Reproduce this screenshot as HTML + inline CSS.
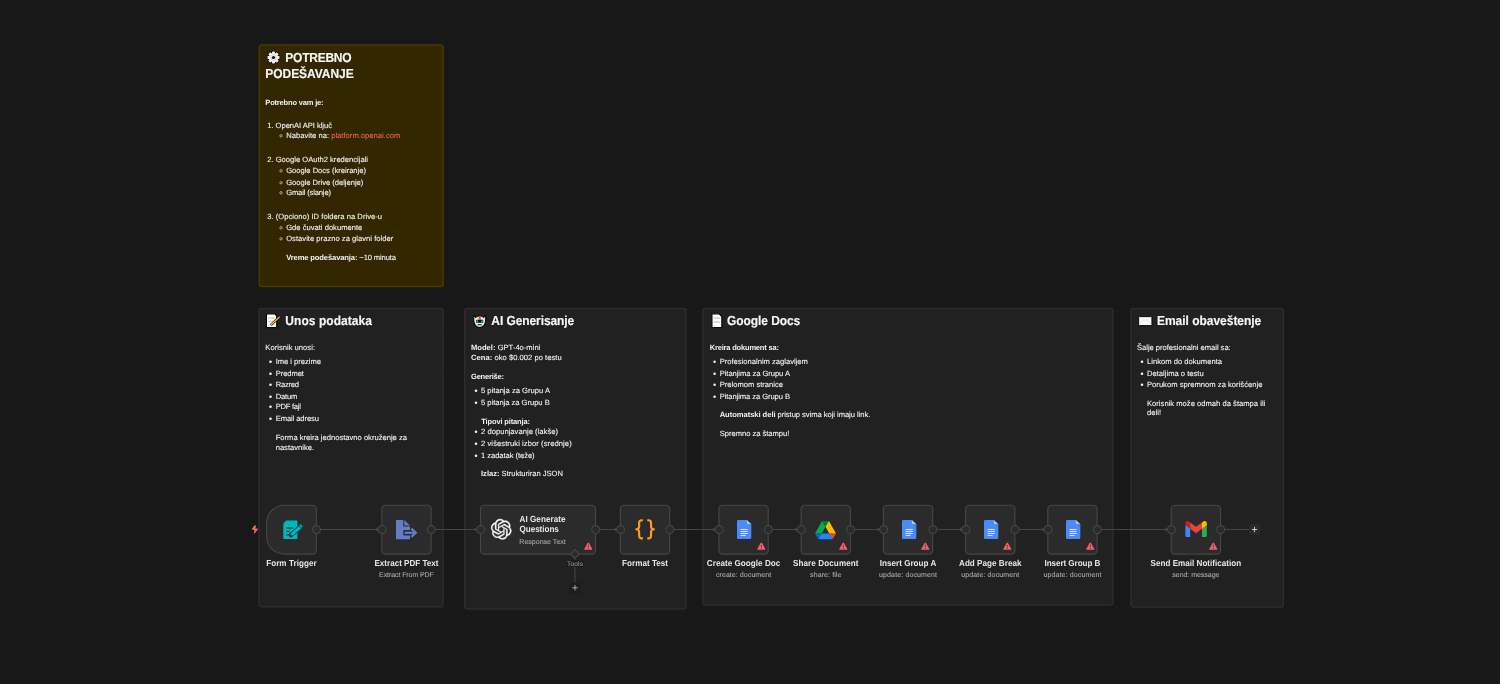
<!DOCTYPE html>
<html lang="sr">
<head>
<meta charset="utf-8">
<meta name="viewport" content="width=1500, initial-scale=1">
<title>n8n – generator testova (workflow)</title>
<style>
html,body{margin:0;padding:0;background:#181818;}
body{width:1500px;height:684px;overflow:hidden;position:relative;font-family:"Liberation Sans",sans-serif;}
#canvas{position:absolute;left:0;top:0;width:1500px;height:684px;overflow:hidden;will-change:transform;background-color:#181818;
 background-image:radial-gradient(circle at 50% 50%, #222222 0, #222222 0.45px, rgba(34,34,34,0) 1.05px);
 background-size:8.2215px 8.2215px;background-position:3.29px 3.29px;}
.sticky,.node,.edges,.trigger{position:absolute;margin:0;padding:0;}
svg{display:block;overflow:visible;}
.bg,.ic{position:absolute;left:0;top:0;}
.t{position:absolute;white-space:pre;margin:0;padding:0;font-weight:400;text-rendering:geometricPrecision;-webkit-text-stroke:0.1px currentColor;}
h2.t,.t.b,.t b{font-weight:700;-webkit-text-stroke:0;}
h2.t{-webkit-text-stroke:0.14px currentColor;}
.t .lnk{color:#ea6350;text-decoration:none;}
.pb{display:inline-block;width:0;height:0;}
</style>
</head>
<body>
<main id="canvas">
<section class="sticky y" id="s1" style="left:257px;top:43px;width:189px;height:246px">
<svg class="bg" width="189" height="246" viewBox="0 0 189 246" aria-hidden="true"><rect x="2.25" y="2" width="183.8" height="241.55" rx="2.6" fill="#332700" stroke="#4b3800" stroke-width="1.45"/><circle cx="24" cy="92.8" r="1.2" fill="none" stroke="#cfc8b4" stroke-width="0.75"/><circle cx="24" cy="127.8" r="1.2" fill="none" stroke="#cfc8b4" stroke-width="0.75"/><circle cx="24" cy="139.8" r="1.2" fill="none" stroke="#cfc8b4" stroke-width="0.75"/><circle cx="24" cy="149.8" r="1.2" fill="none" stroke="#cfc8b4" stroke-width="0.75"/><circle cx="24" cy="184.8" r="1.2" fill="none" stroke="#cfc8b4" stroke-width="0.75"/><circle cx="24" cy="195.8" r="1.2" fill="none" stroke="#cfc8b4" stroke-width="0.75"/></svg>
<svg class="ic" style="left:9.9px;top:7.9px" width="13" height="13" viewBox="0 0 24 24" role="img" aria-label="⚙️"><g transform="translate(12 12)"><g fill="#0c0c0c" stroke="#0c0c0c" stroke-width="2.6" stroke-linejoin="round"><rect x="-2.7" y="-11" width="5.4" height="5.4" rx="0.9" transform="rotate(0)"/><rect x="-2.7" y="-11" width="5.4" height="5.4" rx="0.9" transform="rotate(45)"/><rect x="-2.7" y="-11" width="5.4" height="5.4" rx="0.9" transform="rotate(90)"/><rect x="-2.7" y="-11" width="5.4" height="5.4" rx="0.9" transform="rotate(135)"/><rect x="-2.7" y="-11" width="5.4" height="5.4" rx="0.9" transform="rotate(180)"/><rect x="-2.7" y="-11" width="5.4" height="5.4" rx="0.9" transform="rotate(225)"/><rect x="-2.7" y="-11" width="5.4" height="5.4" rx="0.9" transform="rotate(270)"/><rect x="-2.7" y="-11" width="5.4" height="5.4" rx="0.9" transform="rotate(315)"/><circle r="8.4"/></g><g fill="#f1f1f1"><rect x="-2.7" y="-11" width="5.4" height="5.4" rx="0.9" transform="rotate(0)"/><rect x="-2.7" y="-11" width="5.4" height="5.4" rx="0.9" transform="rotate(45)"/><rect x="-2.7" y="-11" width="5.4" height="5.4" rx="0.9" transform="rotate(90)"/><rect x="-2.7" y="-11" width="5.4" height="5.4" rx="0.9" transform="rotate(135)"/><rect x="-2.7" y="-11" width="5.4" height="5.4" rx="0.9" transform="rotate(180)"/><rect x="-2.7" y="-11" width="5.4" height="5.4" rx="0.9" transform="rotate(225)"/><rect x="-2.7" y="-11" width="5.4" height="5.4" rx="0.9" transform="rotate(270)"/><rect x="-2.7" y="-11" width="5.4" height="5.4" rx="0.9" transform="rotate(315)"/><circle r="8.4"/></g><circle r="5" fill="none" stroke="#c4c4c4" stroke-width="1.3"/><circle r="2.9" fill="#0c0c0c"/></g></svg>
<h2 class="t" id="t0" style="left:28.3px;top:8px;font-size:12px;line-height:15px;color:#f6f6f6;letter-spacing:-0.245px;transform-origin:0 11px;transform:scaleY(1.09);">POTREBNO</h2>
<h2 class="t" id="t1" style="left:8.3px;top:24px;font-size:12px;line-height:15px;color:#f6f6f6;letter-spacing:-0.052px;transform-origin:0 11px;transform:scaleY(1.09);">PODEŠAVANJE</h2>
<p class="t b" id="t2" style="left:8.3px;top:55px;font-size:7.5px;line-height:9px;color:#f2f2f2;letter-spacing:-0.171px;">Potrebno vam je:</p>
<p class="t" id="t3" style="left:10.3px;top:78px;font-size:7.6px;line-height:10px;color:#f2f2f2;letter-spacing:-0.041px;">1. OpenAI API ključ</p>
<p class="t" id="t4" style="left:29.2px;top:88px;font-size:7.6px;line-height:10px;color:#f2f2f2;letter-spacing:0.017px;">Nabavite na: <a class="lnk">platform.openai.com</a></p>
<p class="t" id="t5" style="left:10.3px;top:112px;font-size:7.6px;line-height:10px;color:#f2f2f2;letter-spacing:-0.007px;">2. Google OAuth2 kredencijali</p>
<p class="t" id="t6" style="left:29.2px;top:123px;font-size:7.6px;line-height:10px;color:#f2f2f2;letter-spacing:-0.018px;">Google Docs (kreiranje)</p>
<p class="t" id="t7" style="left:29.2px;top:135px;font-size:7.6px;line-height:10px;color:#f2f2f2;letter-spacing:-0.026px;">Google Drive (deljenje)</p>
<p class="t" id="t8" style="left:29.2px;top:145px;font-size:7.6px;line-height:10px;color:#f2f2f2;letter-spacing:-0.157px;">Gmail (slanje)</p>
<p class="t" id="t9" style="left:10.3px;top:169px;font-size:7.6px;line-height:10px;color:#f2f2f2;letter-spacing:0.022px;">3. (Opciono) ID foldera na Drive-u</p>
<p class="t" id="t10" style="left:29.2px;top:180px;font-size:7.6px;line-height:10px;color:#f2f2f2;letter-spacing:0.006px;">Gde čuvati dokumente</p>
<p class="t" id="t11" style="left:29.2px;top:191px;font-size:7.6px;line-height:10px;color:#f2f2f2;letter-spacing:0.023px;">Ostavite prazno za glavni folder</p>
<p class="t" id="t12" style="left:29.2px;top:210px;font-size:7.6px;line-height:10px;color:#f2f2f2;letter-spacing:-0.127px;"><b>Vreme podešavanja:</b> ~10 minuta</p>
</section>
<section class="sticky g" id="s2" style="left:257px;top:306px;width:188px;height:303px">
<svg class="bg" width="188" height="303" viewBox="0 0 188 303" aria-hidden="true"><rect x="2" y="2.4" width="183.95" height="298.4" rx="2.6" fill="#212121" stroke="#2d2d2d" stroke-width="1.45"/><circle cx="13.5" cy="55.7" r="1.3" fill="#f0f0f0"/><circle cx="13.5" cy="67.7" r="1.3" fill="#f0f0f0"/><circle cx="13.5" cy="78.7" r="1.3" fill="#f0f0f0"/><circle cx="13.5" cy="90.7" r="1.3" fill="#f0f0f0"/><circle cx="13.5" cy="100.7" r="1.3" fill="#f0f0f0"/><circle cx="13.5" cy="112.7" r="1.3" fill="#f0f0f0"/></svg>
<svg class="ic" style="left:8.1px;top:7.15px" width="16.4" height="16.4" viewBox="0 0 24 24" role="img" aria-label="📝"><path d="M2 1.2 H14.4 L17.2 4 V21.4 H2 Z" fill="#fdfdfd" stroke="#0a0a0a" stroke-width="1.9" stroke-linejoin="round"/><g fill="#cfcfcf"><rect x="4.6" y="6.6" width="9.6" height="1.9"/><rect x="4.6" y="11.4" width="7.2" height="1.9"/><rect x="3.6" y="18.2" width="3" height="1"/></g><path d="M9.6 16.6 L21.4 5.8" stroke="#0a0a0a" stroke-width="3.6" stroke-linecap="round"/><path d="M9.2 17.0 L18.8 8.2" stroke="#ffc229" stroke-width="2.0" stroke-linecap="butt"/><path d="M18.8 8.2 L20.4 6.7" stroke="#eeeeee" stroke-width="2.0"/><path d="M20.4 6.7 L21.4 5.8" stroke="#e56a7b" stroke-width="2.0" stroke-linecap="round"/><path d="M9.2 17.0 L7.8 18.3" stroke="#f3e2bb" stroke-width="1.4" stroke-linecap="round"/></svg>
<h2 class="t" id="t13" style="left:28.3px;top:8px;font-size:12px;line-height:15px;color:#f6f6f6;letter-spacing:0.057px;transform-origin:0 11px;transform:scaleY(1.09);">Unos podataka</h2>
<p class="t" id="t14" style="left:8.3px;top:37px;font-size:7.6px;line-height:10px;color:#f2f2f2;letter-spacing:0.022px;">Korisnik unosi:</p>
<p class="t" id="t15" style="left:18.7px;top:51px;font-size:7.6px;line-height:10px;color:#f2f2f2;letter-spacing:-0.023px;">Ime i prezime</p>
<p class="t" id="t16" style="left:18.7px;top:63px;font-size:7.6px;line-height:10px;color:#f2f2f2;letter-spacing:-0.067px;">Predmet</p>
<p class="t" id="t17" style="left:18.7px;top:74px;font-size:7.6px;line-height:10px;color:#f2f2f2;letter-spacing:-0.237px;">Razred</p>
<p class="t" id="t18" style="left:18.7px;top:86px;font-size:7.6px;line-height:10px;color:#f2f2f2;letter-spacing:-0.194px;">Datum</p>
<p class="t" id="t19" style="left:18.7px;top:96px;font-size:7.6px;line-height:10px;color:#f2f2f2;letter-spacing:-0.245px;">PDF fajl</p>
<p class="t" id="t20" style="left:18.7px;top:108px;font-size:7.6px;line-height:10px;color:#f2f2f2;letter-spacing:-0.093px;">Email adresu</p>
<p class="t" id="t21" style="left:18.7px;top:127px;font-size:7.6px;line-height:10px;color:#f2f2f2;">Forma kreira jednostavno okruženje za</p>
<p class="t" id="t22" style="left:18.7px;top:137px;font-size:7.6px;line-height:10px;color:#f2f2f2;letter-spacing:-0.012px;">nastavnike.</p>
</section>
<section class="sticky g" id="s3" style="left:462px;top:306px;width:227px;height:305px">
<svg class="bg" width="227" height="305" viewBox="0 0 227 305" aria-hidden="true"><rect x="2.7" y="2.4" width="221.35" height="300.5" rx="2.6" fill="#212121" stroke="#2d2d2d" stroke-width="1.45"/><circle cx="14" cy="84.7" r="1.3" fill="#f0f0f0"/><circle cx="14" cy="96.7" r="1.3" fill="#f0f0f0"/><circle cx="14" cy="125.7" r="1.3" fill="#f0f0f0"/><circle cx="14" cy="137.7" r="1.3" fill="#f0f0f0"/><circle cx="14" cy="149.7" r="1.3" fill="#f0f0f0"/></svg>
<svg class="ic" style="left:10.6px;top:7.6px" width="13.4" height="14.4" viewBox="0 0 24 26" role="img" aria-label="🤖"><path d="M1.6 1.2 Q3 5 4.6 6.2 Q8 3.6 12 3.6 Q16 3.6 19.4 6.2 Q21 5 22.4 1.2 Q23.4 8 22.6 13 Q21.6 22.6 12 24.6 Q2.4 22.6 1.4 13 Q0.6 8 1.6 1.2 Z" fill="#e9e9e9" stroke="#0a0a0a" stroke-width="2"/><rect x="10.2" y="4.2" width="3.6" height="6.2" fill="#ec3b2c"/><rect x="10.2" y="8.6" width="2" height="1.8" fill="#ffa021"/><rect x="5.6" y="10.6" width="12.8" height="5.4" rx="1.2" fill="#090909"/><rect x="6.2" y="11.2" width="3.2" height="4" rx="1" fill="#19aebd"/><rect x="14.6" y="11.2" width="3.2" height="4" rx="1" fill="#19aebd"/><rect x="8" y="18.4" width="8" height="2" rx="1" fill="#0a0a0a"/></svg>
<h2 class="t" id="t23" style="left:29.3px;top:8px;font-size:12px;line-height:15px;color:#f6f6f6;letter-spacing:-0.081px;transform-origin:0 11px;transform:scaleY(1.09);">AI Generisanje</h2>
<p class="t" id="t24" style="left:9px;top:37px;font-size:7.6px;line-height:10px;color:#f2f2f2;letter-spacing:0.006px;"><b>Model:</b> GPT-4o-mini</p>
<p class="t" id="t25" style="left:9px;top:47px;font-size:7.6px;line-height:10px;color:#f2f2f2;letter-spacing:0.032px;"><b>Cena:</b> oko $0.002 po testu</p>
<p class="t b" id="t26" style="left:9px;top:66px;font-size:7.5px;line-height:9px;color:#f2f2f2;letter-spacing:-0.201px;">Generiše:</p>
<p class="t" id="t27" style="left:19px;top:80px;font-size:7.6px;line-height:10px;color:#f2f2f2;letter-spacing:0.010px;">5 pitanja za Grupu A</p>
<p class="t" id="t28" style="left:19px;top:92px;font-size:7.6px;line-height:10px;color:#f2f2f2;letter-spacing:-0.028px;">5 pitanja za Grupu B</p>
<p class="t b" id="t29" style="left:19.3px;top:111px;font-size:7.5px;line-height:9px;color:#f2f2f2;letter-spacing:-0.143px;">Tipovi pitanja:</p>
<p class="t" id="t30" style="left:19px;top:121px;font-size:7.6px;line-height:10px;color:#f2f2f2;letter-spacing:0.028px;">2 dopunjavanje (lakše)</p>
<p class="t" id="t31" style="left:19px;top:133px;font-size:7.6px;line-height:10px;color:#f2f2f2;letter-spacing:0.077px;">2 višestruki izbor (srednje)</p>
<p class="t" id="t32" style="left:19px;top:145px;font-size:7.6px;line-height:10px;color:#f2f2f2;letter-spacing:-0.057px;">1 zadatak (teže)</p>
<p class="t" id="t33" style="left:19px;top:163px;font-size:7.6px;line-height:10px;color:#f2f2f2;letter-spacing:-0.014px;"><b>Izlaz:</b> Strukturiran JSON</p>
</section>
<section class="sticky g" id="s4" style="left:700px;top:306px;width:415px;height:301px">
<svg class="bg" width="415" height="301" viewBox="0 0 415 301" aria-hidden="true"><rect x="2.95" y="2.4" width="410" height="296.5" rx="2.6" fill="#212121" stroke="#2d2d2d" stroke-width="1.45"/><circle cx="14.6" cy="55.7" r="1.3" fill="#f0f0f0"/><circle cx="14.6" cy="67.7" r="1.3" fill="#f0f0f0"/><circle cx="14.6" cy="78.7" r="1.3" fill="#f0f0f0"/><circle cx="14.6" cy="90.7" r="1.3" fill="#f0f0f0"/></svg>
<svg class="ic" style="left:10.7px;top:7px" width="11.8" height="15.3" viewBox="0 0 20 26" role="img" aria-label="📄"><path d="M1.6 1.4 H13.6 L18.4 6 V24.6 H1.6 Z" fill="#fdfdfd" stroke="#0a0a0a" stroke-width="2" stroke-linejoin="round"/><g fill="#cdcdcd"><rect x="4.2" y="7.4" width="11.4" height="2.4"/><rect x="4.2" y="14.2" width="11.4" height="2.4"/><rect x="4" y="21" width="3.4" height="1.2"/></g></svg>
<h2 class="t" id="t34" style="left:27px;top:8px;font-size:12px;line-height:15px;color:#f6f6f6;letter-spacing:-0.072px;transform-origin:0 11px;transform:scaleY(1.09);">Google Docs</h2>
<p class="t b" id="t35" style="left:9.7px;top:37px;font-size:7.5px;line-height:9px;color:#f2f2f2;letter-spacing:-0.180px;">Kreira dokument sa:</p>
<p class="t" id="t36" style="left:19.7px;top:51px;font-size:7.6px;line-height:10px;color:#f2f2f2;">Profesionalnim zaglavljem</p>
<p class="t" id="t37" style="left:19.7px;top:63px;font-size:7.6px;line-height:10px;color:#f2f2f2;letter-spacing:-0.055px;">Pitanjima za Grupu A</p>
<p class="t" id="t38" style="left:19.7px;top:74px;font-size:7.6px;line-height:10px;color:#f2f2f2;">Prelomom stranice</p>
<p class="t" id="t39" style="left:19.7px;top:86px;font-size:7.6px;line-height:10px;color:#f2f2f2;letter-spacing:-0.077px;">Pitanjima za Grupu B</p>
<p class="t" id="t40" style="left:19.7px;top:104px;font-size:7.6px;line-height:10px;color:#f2f2f2;letter-spacing:-0.048px;"><b>Automatski deli</b> pristup svima koji imaju link.</p>
<p class="t" id="t41" style="left:19.7px;top:123px;font-size:7.6px;line-height:10px;color:#f2f2f2;letter-spacing:-0.022px;">Spremno za štampu!</p>
</section>
<section class="sticky g" id="s5" style="left:1128px;top:306px;width:158px;height:303px">
<svg class="bg" width="158" height="303" viewBox="0 0 158 303" aria-hidden="true"><rect x="2.9" y="2.4" width="152.55" height="298.5" rx="2.6" fill="#212121" stroke="#2d2d2d" stroke-width="1.45"/><circle cx="14" cy="55.7" r="1.3" fill="#f0f0f0"/><circle cx="14" cy="67.7" r="1.3" fill="#f0f0f0"/><circle cx="14" cy="78.7" r="1.3" fill="#f0f0f0"/></svg>
<svg class="ic" style="left:10px;top:9.9px" width="14.6" height="10.2" viewBox="0 0 28 19.6" role="img" aria-label="✉️"><rect x="1.2" y="1.2" width="25.6" height="17.2" rx="1.4" fill="#f7f7f7" stroke="#0a0a0a" stroke-width="1.9"/><path d="M3 16.6 L10 7.6 Q11 6.6 12.4 7.6 L14 8.8 L15.6 7.6 Q17 6.6 18 7.6 L25 16.6" fill="none" stroke="#dcdcdc" stroke-width="1"/></svg>
<h2 class="t" id="t42" style="left:29px;top:8px;font-size:12px;line-height:15px;color:#f6f6f6;letter-spacing:-0.026px;transform-origin:0 11px;transform:scaleY(1.09);">Email obaveštenje</h2>
<p class="t" id="t43" style="left:9px;top:37px;font-size:7.6px;line-height:10px;color:#f2f2f2;letter-spacing:-0.031px;">Šalje profesionalni email sa:</p>
<p class="t" id="t44" style="left:19px;top:51px;font-size:7.6px;line-height:10px;color:#f2f2f2;letter-spacing:0.016px;">Linkom do dokumenta</p>
<p class="t" id="t45" style="left:19px;top:63px;font-size:7.6px;line-height:10px;color:#f2f2f2;letter-spacing:0.009px;">Detaljima o testu</p>
<p class="t" id="t46" style="left:19px;top:74px;font-size:7.6px;line-height:10px;color:#f2f2f2;letter-spacing:0.021px;">Porukom spremnom za korišćenje</p>
<p class="t" id="t47" style="left:19px;top:93px;font-size:7.6px;line-height:10px;color:#f2f2f2;letter-spacing:0.017px;">Korisnik može odmah da štampa ili</p>
<p class="t" id="t48" style="left:19px;top:102px;font-size:7.6px;line-height:10px;color:#f2f2f2;letter-spacing:0.016px;">deli!</p>
</section>
<svg class="edges" id="edges" width="1500" height="684" viewBox="0 0 1500 684" aria-hidden="true" style="left:0;top:0">
<g fill="none" stroke="#454545" stroke-width="1.05"><path d="M316.3 529.5 H381.8"/><path d="M376.2 527.9 L378.2 529.5 L376.2 531.1 Z" fill="#4c4c4c" stroke="#4c4c4c" stroke-width="0.4"/><path d="M431.1 529.5 H480.5"/><path d="M474.9 527.9 L476.9 529.5 L474.9 531.1 Z" fill="#4c4c4c" stroke="#4c4c4c" stroke-width="0.4"/><path d="M595.5 529.5 H620.4"/><path d="M614.8 527.9 L616.8 529.5 L614.8 531.1 Z" fill="#4c4c4c" stroke="#4c4c4c" stroke-width="0.4"/><path d="M669.7 529.5 H718.9"/><path d="M713.3 527.9 L715.3 529.5 L713.3 531.1 Z" fill="#4c4c4c" stroke="#4c4c4c" stroke-width="0.4"/><path d="M768.2 529.5 H801.1"/><path d="M795.5 527.9 L797.5 529.5 L795.5 531.1 Z" fill="#4c4c4c" stroke="#4c4c4c" stroke-width="0.4"/><path d="M850.4 529.5 H883.4"/><path d="M877.8 527.9 L879.8 529.5 L877.8 531.1 Z" fill="#4c4c4c" stroke="#4c4c4c" stroke-width="0.4"/><path d="M932.7 529.5 H965.6"/><path d="M960 527.9 L962 529.5 L960 531.1 Z" fill="#4c4c4c" stroke="#4c4c4c" stroke-width="0.4"/><path d="M1014.9 529.5 H1047.8"/><path d="M1042.2 527.9 L1044.2 529.5 L1042.2 531.1 Z" fill="#4c4c4c" stroke="#4c4c4c" stroke-width="0.4"/><path d="M1097.1 529.5 H1171.2"/><path d="M1165.6 527.9 L1167.6 529.5 L1165.6 531.1 Z" fill="#4c4c4c" stroke="#4c4c4c" stroke-width="0.4"/><path d="M1220.5 529.5 H1249.5"/><path d="M574.9 558 V582.5"/></g>
<rect x="1249" y="524" width="11" height="11" rx="2.2" fill="#2a2a2a"/><path d="M1251.9 529.5 H1257.1 M1254.5 526.9 V532.1" stroke="#d6d6d6" stroke-width="0.9" fill="none"/><rect x="569.4" y="582.2" width="11.2" height="11.2" rx="2.2" fill="#1d1d1d"/><path d="M572.3 587.8 H577.7 M575 585.1 V590.5" stroke="#b8b8b8" stroke-width="0.9" fill="none"/>
</svg>
<div class="node trigger" id="n1" style="left:260px;top:500px;width:63px;height:82px">
<svg class="bg" width="63" height="82" viewBox="0 0 63 82" aria-hidden="true"><path d="M24.6 5.25 H52.7 A3.6 3.6 0 0 1 56.3 8.85 V50.55 A3.6 3.6 0 0 1 52.7 54.15 H24.6 A18.0 18.0 0 0 1 6.6 36.15 V23.25 A18.0 18.0 0 0 1 24.6 5.25 Z" fill="#2b2b2b" stroke="#464646" stroke-width="1.15"/><circle cx="56.5" cy="29.5" r="3.95" fill="#2b2b2b" stroke="#464646" stroke-width="1.15"/></svg>
<svg class="ic" style="left:-9.4px;top:24.8px" width="8" height="8.6" viewBox="0 0 8 8.6" ><path d="M3.4 0.4 L5.1 0.4 L4.5 3.4 L7.3 3.8 L3.9 8.2 L2.9 8.2 L3.5 5.1 L0.5 4.6 Z" fill="#ee6a60"/></svg><svg class="ic" style="left:22.7px;top:19.8px" width="19.6" height="19.4" viewBox="0 0 20 19.8" ><path d="M3.1 0.4 H14.7 V19.4 H0.3 V3.2 Z" fill="#00b7bc"/><path d="M0.3 3.2 L3.1 0.4 V3.2 Z" fill="#123c40"/><path d="M1.2 3.1 L2.9 1.4 V3.1 Z" fill="#7fdcdf"/><g fill="#123c40"><rect x="3.3" y="7.5" width="6.9" height="1.3"/><rect x="3.3" y="11" width="3.4" height="1.3"/><rect x="3.3" y="14.4" width="3" height="1.3"/></g><path d="M8.1 15.3 L18.9 6.1" stroke="#123c40" stroke-width="4.9" stroke-linecap="round"/><path d="M9.2 14.4 L18.2 6.7" stroke="#00b7bc" stroke-width="3.1" stroke-linecap="butt"/><path d="M7.6 15.8 L8.6 12.6 L10.9 15.2 Z" fill="#00b7bc"/><path d="M16.0 5.3 L19.2 9.0" stroke="#123c40" stroke-width="0.7"/><path d="M17.9 4.2 L20 6.6 L19.0 7.5 L16.9 5.1 Z" fill="#00b7bc"/></svg>
<div class="t b label" id="t49" style="left:6.15px;top:59px;font-size:8.1px;line-height:10px;color:#e6e6e6;letter-spacing:0.062px;transform-origin:0 7px;transform:scaleY(1.08);">Form Trigger</div>
</div>
<div class="node std" id="n2" style="left:375px;top:500px;width:63px;height:82px">
<svg class="bg" width="63" height="82" viewBox="0 0 63 82" aria-hidden="true"><path d="M10.4 5.25 H52.5 A3.6 3.6 0 0 1 56.1 8.85 V50.55 A3.6 3.6 0 0 1 52.5 54.15 H10.4 A3.6 3.6 0 0 1 6.8 50.55 V8.85 A3.6 3.6 0 0 1 10.4 5.25 Z" fill="#2b2b2b" stroke="#464646" stroke-width="1.15"/><circle cx="7" cy="29.5" r="3.95" fill="#2b2b2b" stroke="#464646" stroke-width="1.15"/><circle cx="56.3" cy="29.5" r="3.95" fill="#2b2b2b" stroke="#464646" stroke-width="1.15"/></svg>
<svg class="ic" style="left:21px;top:20px" width="20.8" height="19.2" viewBox="0 0 20.8 19.2" ><path d="M0 0 H7.3 V6.6 H14 V9.9 H8.6 Q7.2 9.9 7.2 11.3 V14.2 Q7.2 15.6 8.6 15.6 H14 V19.2 H0 Z" fill="#647cc7"/><path d="M8.3 0 L14 5.6 H8.3 Z" fill="#647cc7"/><path d="M8.6 12.75 H19.2" stroke="#647cc7" stroke-width="2.3" fill="none"/><path d="M15.3 8.6 L19.8 12.75 L15.3 16.9" stroke="#647cc7" stroke-width="2.2" fill="none" stroke-linejoin="miter"/></svg>
<div class="t b label" id="t50" style="left:-0.55px;top:59px;font-size:8.1px;line-height:10px;color:#e6e6e6;letter-spacing:-0.011px;transform-origin:0 7px;transform:scaleY(1.08);">Extract PDF Text</div>
<div class="t sub" id="t51" style="left:4.05px;top:71px;font-size:7.0px;line-height:9px;color:#a8a8a8;letter-spacing:-0.081px;">Extract From PDF</div>
</div>
<div class="node ai" id="n3" style="left:474px;top:500px;width:128px;height:82px">
<svg class="bg" width="128" height="82" viewBox="0 0 128 82" aria-hidden="true"><path d="M10.1 5.25 H117.9 A3.6 3.6 0 0 1 121.5 8.85 V50.55 A3.6 3.6 0 0 1 117.9 54.15 H10.1 A3.6 3.6 0 0 1 6.5 50.55 V8.85 A3.6 3.6 0 0 1 10.1 5.25 Z" fill="#2b2b2b" stroke="#464646" stroke-width="1.15"/><circle cx="6.7" cy="29.5" r="3.95" fill="#2b2b2b" stroke="#464646" stroke-width="1.15"/><circle cx="121.7" cy="29.5" r="3.95" fill="#2b2b2b" stroke="#464646" stroke-width="1.15"/><path d="M96.7 53.9 L101 49.6 L105.3 53.9 L101 58.2 Z" fill="#2b2b2b" stroke="#464646" stroke-width="1.15"/><rect x="92.6" y="60.2" width="16.8" height="6.8" fill="#1c1c1c"/></svg>
<svg class="ic" style="left:16.8px;top:19.3px" width="20.5" height="20.5" viewBox="0 0 24 24" ><path fill="#f7f7f7" stroke="#f7f7f7" stroke-width="0.35" d="M22.2819 9.8211a5.9847 5.9847 0 0 0-.5157-4.9108 6.0462 6.0462 0 0 0-6.5098-2.9A6.0651 6.0651 0 0 0 4.9807 4.1818a5.9847 5.9847 0 0 0-3.9977 2.9 6.0462 6.0462 0 0 0 .7427 7.0966 5.98 5.98 0 0 0 .511 4.9107 6.051 6.051 0 0 0 6.5146 2.9001A5.9847 5.9847 0 0 0 13.2599 24a6.0557 6.0557 0 0 0 5.7718-4.2058 5.9894 5.9894 0 0 0 3.9977-2.9001 6.0557 6.0557 0 0 0-.7475-7.0729zm-9.022 12.6081a4.4755 4.4755 0 0 1-2.8764-1.0408l.1419-.0804 4.7783-2.7582a.7948.7948 0 0 0 .3927-.6813v-6.7369l2.02 1.1686a.071.071 0 0 1 .038.052v5.5826a4.504 4.504 0 0 1-4.4945 4.4944zm-9.6607-4.1254a4.4708 4.4708 0 0 1-.5346-3.0137l.142.0852 4.783 2.7582a.7712.7712 0 0 0 .7806 0l5.8428-3.3685v2.3324a.0804.0804 0 0 1-.0332.0615L9.74 19.9502a4.4992 4.4992 0 0 1-6.1408-1.6464zM2.3408 7.8956a4.485 4.485 0 0 1 2.3655-1.9728V11.6a.7664.7664 0 0 0 .3879.6765l5.8144 3.3543-2.0201 1.1685a.0757.0757 0 0 1-.071 0l-4.8303-2.7865A4.504 4.504 0 0 1 2.3408 7.872zm16.5963 3.8558L13.1038 8.364 15.1192 7.2a.0757.0757 0 0 1 .071 0l4.8303 2.7913a4.4944 4.4944 0 0 1-.6765 8.1042v-5.6772a.79.79 0 0 0-.407-.667zm2.0107-3.0231l-.142-.0852-4.7735-2.7818a.7759.7759 0 0 0-.7854 0L9.409 9.2297V6.8974a.0662.0662 0 0 1 .0284-.0615l4.8303-2.7866a4.4992 4.4992 0 0 1 6.6802 4.66zM8.3065 12.863l-2.02-1.1638a.0804.0804 0 0 1-.038-.0567V6.0742a4.4992 4.4992 0 0 1 7.3757-3.4537l-.142.0805L8.704 5.459a.7948.7948 0 0 0-.3927.6813zm1.0976-2.3654l2.602-1.4998 2.6069 1.4998v2.9994l-2.5974 1.4997-2.6067-1.4997Z"/></svg><svg class="ic" style="left:109.9px;top:42.2px" width="8.6" height="8.2" viewBox="0 0 20 18.6" ><path d="M10 1.2 Q11 1.2 11.6 2.2 L19.4 16 Q20.2 17.8 18.2 18 H1.8 Q-0.2 17.8 0.6 16 L8.4 2.2 Q9 1.2 10 1.2 Z" fill="#f0616d"/><rect x="8.9" y="6" width="2.2" height="6.4" rx="1" fill="#7a2a33"/><circle cx="10" cy="15" r="1.3" fill="#7a2a33"/></svg>
<div class="t b label" id="t65" style="left:45.5px;top:15px;font-size:8.1px;line-height:10px;color:#e6e6e6;letter-spacing:0.056px;transform-origin:0 7px;transform:scaleY(1.1);">AI Generate</div>
<div class="t b label" id="t66" style="left:45.5px;top:25px;font-size:8.1px;line-height:10px;color:#e6e6e6;letter-spacing:-0.035px;transform-origin:0 7px;transform:scaleY(1.1);">Questions</div>
<div class="t sub" id="t67" style="left:45.3px;top:38px;font-size:7.0px;line-height:9px;color:#a8a8a8;letter-spacing:0.026px;">Response Text</div>
<div class="t sub" id="t68" style="left:93px;top:61px;font-size:6.6px;line-height:8px;color:#8e8e8e;letter-spacing:0.148px;">Tools</div>
</div>
<div class="node std" id="n4" style="left:614px;top:500px;width:62px;height:82px">
<svg class="bg" width="62" height="82" viewBox="0 0 62 82" aria-hidden="true"><path d="M10 5.25 H52.1 A3.6 3.6 0 0 1 55.7 8.85 V50.55 A3.6 3.6 0 0 1 52.1 54.15 H10 A3.6 3.6 0 0 1 6.4 50.55 V8.85 A3.6 3.6 0 0 1 10 5.25 Z" fill="#2b2b2b" stroke="#464646" stroke-width="1.15"/><circle cx="6.6" cy="29.5" r="3.95" fill="#2b2b2b" stroke="#464646" stroke-width="1.15"/><circle cx="55.9" cy="29.5" r="3.95" fill="#2b2b2b" stroke="#464646" stroke-width="1.15"/></svg>
<svg class="ic" style="left:21px;top:19.3px" width="20.2" height="20.6" viewBox="0 0 20.2 20.6" ><g fill="none" stroke="#ff9a22" stroke-width="2.15" stroke-linejoin="round"><path d="M7.9 1.2 H6.7 Q4.15 1.2 4.15 3.8 V7.6 Q4.15 10 1.5 10.3 Q4.15 10.6 4.15 13 V16.8 Q4.15 19.4 6.7 19.4 H7.9"/><path d="M12.3 1.2 H13.5 Q16.05 1.2 16.05 3.8 V7.6 Q16.05 10 18.7 10.3 Q16.05 10.6 16.05 13 V16.8 Q16.05 19.4 13.5 19.4 H12.3"/></g><path d="M0.1 10.3 L2.6 9.1 V11.5 Z M20.1 10.3 L17.6 9.1 V11.5 Z" fill="#ff9a22"/></svg>
<div class="t b label" id="t52" style="left:8.05px;top:59px;font-size:8.1px;line-height:10px;color:#e6e6e6;letter-spacing:0.027px;transform-origin:0 7px;transform:scaleY(1.08);">Format Test</div>
</div>
<div class="node std" id="n5" style="left:712px;top:500px;width:63px;height:82px">
<svg class="bg" width="63" height="82" viewBox="0 0 63 82" aria-hidden="true"><path d="M10.5 5.25 H52.6 A3.6 3.6 0 0 1 56.2 8.85 V50.55 A3.6 3.6 0 0 1 52.6 54.15 H10.5 A3.6 3.6 0 0 1 6.9 50.55 V8.85 A3.6 3.6 0 0 1 10.5 5.25 Z" fill="#2b2b2b" stroke="#464646" stroke-width="1.15"/><circle cx="7.1" cy="29.5" r="3.95" fill="#2b2b2b" stroke="#464646" stroke-width="1.15"/><circle cx="56.4" cy="29.5" r="3.95" fill="#2b2b2b" stroke="#464646" stroke-width="1.15"/></svg>
<svg class="ic" style="left:25.35px;top:20.2px" width="14.3" height="19" viewBox="0 0 29 40" preserveAspectRatio="none"><path d="M2.6 0 H20 L29 9 V37.4 Q29 40 26.4 40 H2.6 Q0 40 0 37.4 V2.6 Q0 0 2.6 0 Z" fill="#4b8bf5"/><path d="M20 0 L29 9 H22.4 Q20 9 20 6.6 Z" fill="#a9c7fb"/><path d="M20.6 9 H29 V15 Z" fill="#3a72d4" opacity=".5"/><g fill="#eaf1fe"><rect x="7.2" y="19.2" width="14.6" height="1.9"/><rect x="7.2" y="23.3" width="14.6" height="1.9"/><rect x="7.2" y="27.4" width="14.6" height="1.9"/><rect x="7.2" y="31.5" width="10.2" height="1.9"/></g></svg><svg class="ic" style="left:44.6px;top:42.2px" width="8.6" height="8.2" viewBox="0 0 20 18.6" ><path d="M10 1.2 Q11 1.2 11.6 2.2 L19.4 16 Q20.2 17.8 18.2 18 H1.8 Q-0.2 17.8 0.6 16 L8.4 2.2 Q9 1.2 10 1.2 Z" fill="#f0616d"/><rect x="8.9" y="6" width="2.2" height="6.4" rx="1" fill="#7a2a33"/><circle cx="10" cy="15" r="1.3" fill="#7a2a33"/></svg>
<div class="t b label" id="t53" style="left:-5.2px;top:59px;font-size:8.1px;line-height:10px;color:#e6e6e6;letter-spacing:0.039px;transform-origin:0 7px;transform:scaleY(1.08);">Create Google Doc</div>
<div class="t sub" id="t54" style="left:3.95px;top:71px;font-size:7.0px;line-height:9px;color:#a8a8a8;letter-spacing:0.074px;">create: document</div>
</div>
<div class="node std" id="n6" style="left:795px;top:500px;width:62px;height:82px">
<svg class="bg" width="62" height="82" viewBox="0 0 62 82" aria-hidden="true"><path d="M9.7 5.25 H51.8 A3.6 3.6 0 0 1 55.4 8.85 V50.55 A3.6 3.6 0 0 1 51.8 54.15 H9.7 A3.6 3.6 0 0 1 6.1 50.55 V8.85 A3.6 3.6 0 0 1 9.7 5.25 Z" fill="#2b2b2b" stroke="#464646" stroke-width="1.15"/><circle cx="6.3" cy="29.5" r="3.95" fill="#2b2b2b" stroke="#464646" stroke-width="1.15"/><circle cx="55.6" cy="29.5" r="3.95" fill="#2b2b2b" stroke="#464646" stroke-width="1.15"/></svg>
<svg class="ic" style="left:20px;top:20.7px" width="21" height="18.3" viewBox="0 0 87.3 78" ><path d="m6.6 66.85 3.85 6.65c.8 1.4 1.95 2.5 3.3 3.3l13.75-23.8h-27.5c0 1.55.4 3.1 1.2 4.5z" fill="#0066da"/><path d="m43.65 25-13.75-23.8c-1.35.8-2.5 1.9-3.3 3.3l-25.4 44a9.06 9.06 0 0 0 -1.2 4.5h27.5z" fill="#00ac47"/><path d="m73.55 76.8c1.35-.8 2.5-1.9 3.3-3.3l1.6-2.75 7.65-13.25c.8-1.4 1.2-2.95 1.2-4.5h-27.502l5.852 11.5z" fill="#ea4335"/><path d="m43.65 25 13.75-23.8c-1.35-.8-2.9-1.2-4.5-1.2h-18.5c-1.6 0-3.15.45-4.5 1.2z" fill="#00832d"/><path d="m59.8 53h-32.3l-13.75 23.8c1.35.8 2.9 1.2 4.5 1.2h50.8c1.6 0 3.15-.45 4.5-1.2z" fill="#2684fc"/><path d="m73.4 26.5-12.7-22c-.8-1.4-1.95-2.5-3.3-3.3l-13.75 23.8 16.15 28h27.45c0-1.55-.4-3.1-1.2-4.5z" fill="#ffba00"/></svg><svg class="ic" style="left:43.8px;top:42.2px" width="8.6" height="8.2" viewBox="0 0 20 18.6" ><path d="M10 1.2 Q11 1.2 11.6 2.2 L19.4 16 Q20.2 17.8 18.2 18 H1.8 Q-0.2 17.8 0.6 16 L8.4 2.2 Q9 1.2 10 1.2 Z" fill="#f0616d"/><rect x="8.9" y="6" width="2.2" height="6.4" rx="1" fill="#7a2a33"/><circle cx="10" cy="15" r="1.3" fill="#7a2a33"/></svg>
<div class="t b label" id="t55" style="left:-2px;top:59px;font-size:8.1px;line-height:10px;color:#e6e6e6;letter-spacing:0.090px;transform-origin:0 7px;transform:scaleY(1.08);">Share Document</div>
<div class="t sub" id="t56" style="left:15.1px;top:71px;font-size:7.0px;line-height:9px;color:#a8a8a8;letter-spacing:0.094px;">share: file</div>
</div>
<div class="node std" id="n7" style="left:877px;top:500px;width:62px;height:82px">
<svg class="bg" width="62" height="82" viewBox="0 0 62 82" aria-hidden="true"><path d="M10 5.25 H52.1 A3.6 3.6 0 0 1 55.7 8.85 V50.55 A3.6 3.6 0 0 1 52.1 54.15 H10 A3.6 3.6 0 0 1 6.4 50.55 V8.85 A3.6 3.6 0 0 1 10 5.25 Z" fill="#2b2b2b" stroke="#464646" stroke-width="1.15"/><circle cx="6.6" cy="29.5" r="3.95" fill="#2b2b2b" stroke="#464646" stroke-width="1.15"/><circle cx="55.9" cy="29.5" r="3.95" fill="#2b2b2b" stroke="#464646" stroke-width="1.15"/></svg>
<svg class="ic" style="left:24.85px;top:20.2px" width="14.3" height="19" viewBox="0 0 29 40" preserveAspectRatio="none"><path d="M2.6 0 H20 L29 9 V37.4 Q29 40 26.4 40 H2.6 Q0 40 0 37.4 V2.6 Q0 0 2.6 0 Z" fill="#4b8bf5"/><path d="M20 0 L29 9 H22.4 Q20 9 20 6.6 Z" fill="#a9c7fb"/><path d="M20.6 9 H29 V15 Z" fill="#3a72d4" opacity=".5"/><g fill="#eaf1fe"><rect x="7.2" y="19.2" width="14.6" height="1.9"/><rect x="7.2" y="23.3" width="14.6" height="1.9"/><rect x="7.2" y="27.4" width="14.6" height="1.9"/><rect x="7.2" y="31.5" width="10.2" height="1.9"/></g></svg><svg class="ic" style="left:44.1px;top:42.2px" width="8.6" height="8.2" viewBox="0 0 20 18.6" ><path d="M10 1.2 Q11 1.2 11.6 2.2 L19.4 16 Q20.2 17.8 18.2 18 H1.8 Q-0.2 17.8 0.6 16 L8.4 2.2 Q9 1.2 10 1.2 Z" fill="#f0616d"/><rect x="8.9" y="6" width="2.2" height="6.4" rx="1" fill="#7a2a33"/><circle cx="10" cy="15" r="1.3" fill="#7a2a33"/></svg>
<div class="t b label" id="t57" style="left:2.8px;top:59px;font-size:8.1px;line-height:10px;color:#e6e6e6;letter-spacing:0.010px;transform-origin:0 7px;transform:scaleY(1.08);">Insert Group A</div>
<div class="t sub" id="t58" style="left:2.05px;top:71px;font-size:7.0px;line-height:9px;color:#a8a8a8;letter-spacing:0.130px;">update: document</div>
</div>
<div class="node std" id="n8" style="left:959px;top:500px;width:62px;height:82px">
<svg class="bg" width="62" height="82" viewBox="0 0 62 82" aria-hidden="true"><path d="M10.2 5.25 H52.3 A3.6 3.6 0 0 1 55.9 8.85 V50.55 A3.6 3.6 0 0 1 52.3 54.15 H10.2 A3.6 3.6 0 0 1 6.6 50.55 V8.85 A3.6 3.6 0 0 1 10.2 5.25 Z" fill="#2b2b2b" stroke="#464646" stroke-width="1.15"/><circle cx="6.8" cy="29.5" r="3.95" fill="#2b2b2b" stroke="#464646" stroke-width="1.15"/><circle cx="56.1" cy="29.5" r="3.95" fill="#2b2b2b" stroke="#464646" stroke-width="1.15"/></svg>
<svg class="ic" style="left:25.05px;top:20.2px" width="14.3" height="19" viewBox="0 0 29 40" preserveAspectRatio="none"><path d="M2.6 0 H20 L29 9 V37.4 Q29 40 26.4 40 H2.6 Q0 40 0 37.4 V2.6 Q0 0 2.6 0 Z" fill="#4b8bf5"/><path d="M20 0 L29 9 H22.4 Q20 9 20 6.6 Z" fill="#a9c7fb"/><path d="M20.6 9 H29 V15 Z" fill="#3a72d4" opacity=".5"/><g fill="#eaf1fe"><rect x="7.2" y="19.2" width="14.6" height="1.9"/><rect x="7.2" y="23.3" width="14.6" height="1.9"/><rect x="7.2" y="27.4" width="14.6" height="1.9"/><rect x="7.2" y="31.5" width="10.2" height="1.9"/></g></svg><svg class="ic" style="left:44.3px;top:42.2px" width="8.6" height="8.2" viewBox="0 0 20 18.6" ><path d="M10 1.2 Q11 1.2 11.6 2.2 L19.4 16 Q20.2 17.8 18.2 18 H1.8 Q-0.2 17.8 0.6 16 L8.4 2.2 Q9 1.2 10 1.2 Z" fill="#f0616d"/><rect x="8.9" y="6" width="2.2" height="6.4" rx="1" fill="#7a2a33"/><circle cx="10" cy="15" r="1.3" fill="#7a2a33"/></svg>
<div class="t b label" id="t59" style="left:0px;top:59px;font-size:8.1px;line-height:10px;color:#e6e6e6;letter-spacing:0.032px;transform-origin:0 7px;transform:scaleY(1.08);">Add Page Break</div>
<div class="t sub" id="t60" style="left:2.25px;top:71px;font-size:7.0px;line-height:9px;color:#a8a8a8;letter-spacing:0.130px;">update: document</div>
</div>
<div class="node std" id="n9" style="left:1041px;top:500px;width:63px;height:82px">
<svg class="bg" width="63" height="82" viewBox="0 0 63 82" aria-hidden="true"><path d="M10.4 5.25 H52.5 A3.6 3.6 0 0 1 56.1 8.85 V50.55 A3.6 3.6 0 0 1 52.5 54.15 H10.4 A3.6 3.6 0 0 1 6.8 50.55 V8.85 A3.6 3.6 0 0 1 10.4 5.25 Z" fill="#2b2b2b" stroke="#464646" stroke-width="1.15"/><circle cx="7" cy="29.5" r="3.95" fill="#2b2b2b" stroke="#464646" stroke-width="1.15"/><circle cx="56.3" cy="29.5" r="3.95" fill="#2b2b2b" stroke="#464646" stroke-width="1.15"/></svg>
<svg class="ic" style="left:25.25px;top:20.2px" width="14.3" height="19" viewBox="0 0 29 40" preserveAspectRatio="none"><path d="M2.6 0 H20 L29 9 V37.4 Q29 40 26.4 40 H2.6 Q0 40 0 37.4 V2.6 Q0 0 2.6 0 Z" fill="#4b8bf5"/><path d="M20 0 L29 9 H22.4 Q20 9 20 6.6 Z" fill="#a9c7fb"/><path d="M20.6 9 H29 V15 Z" fill="#3a72d4" opacity=".5"/><g fill="#eaf1fe"><rect x="7.2" y="19.2" width="14.6" height="1.9"/><rect x="7.2" y="23.3" width="14.6" height="1.9"/><rect x="7.2" y="27.4" width="14.6" height="1.9"/><rect x="7.2" y="31.5" width="10.2" height="1.9"/></g></svg><svg class="ic" style="left:44.5px;top:42.2px" width="8.6" height="8.2" viewBox="0 0 20 18.6" ><path d="M10 1.2 Q11 1.2 11.6 2.2 L19.4 16 Q20.2 17.8 18.2 18 H1.8 Q-0.2 17.8 0.6 16 L8.4 2.2 Q9 1.2 10 1.2 Z" fill="#f0616d"/><rect x="8.9" y="6" width="2.2" height="6.4" rx="1" fill="#7a2a33"/><circle cx="10" cy="15" r="1.3" fill="#7a2a33"/></svg>
<div class="t b label" id="t61" style="left:3.55px;top:59px;font-size:8.1px;line-height:10px;color:#e6e6e6;letter-spacing:-0.067px;transform-origin:0 7px;transform:scaleY(1.08);">Insert Group B</div>
<div class="t sub" id="t62" style="left:2.45px;top:71px;font-size:7.0px;line-height:9px;color:#a8a8a8;letter-spacing:0.130px;">update: document</div>
</div>
<div class="node std" id="n10" style="left:1165px;top:500px;width:62px;height:82px">
<svg class="bg" width="62" height="82" viewBox="0 0 62 82" aria-hidden="true"><path d="M9.8 5.25 H51.9 A3.6 3.6 0 0 1 55.5 8.85 V50.55 A3.6 3.6 0 0 1 51.9 54.15 H9.8 A3.6 3.6 0 0 1 6.2 50.55 V8.85 A3.6 3.6 0 0 1 9.8 5.25 Z" fill="#2b2b2b" stroke="#464646" stroke-width="1.15"/><circle cx="6.4" cy="29.5" r="3.95" fill="#2b2b2b" stroke="#464646" stroke-width="1.15"/><circle cx="55.7" cy="29.5" r="3.95" fill="#2b2b2b" stroke="#464646" stroke-width="1.15"/></svg>
<svg class="ic" style="left:20px;top:21px" width="22.2" height="16.2" viewBox="0 0 256 193" ><path d="M58.2 192.05V93.14L27.5 65.08 0 49.5v125.1c0 9.66 7.83 17.45 17.46 17.45z" fill="#4285f4"/><path d="M197.8 192.05h40.74c9.66 0 17.46-7.83 17.46-17.46V49.5l-31.16 17.84-27.04 25.8z" fill="#34a853"/><path d="M58.2 93.14l-4.17-38.65 4.17-36.99L128 69.87l69.8-52.37 4.67 35-4.67 40.64L128 145.5z" fill="#ea4335"/><path d="M197.8 17.5v75.64L256 49.5V26.23c0-21.58-24.64-33.89-41.9-20.94z" fill="#fbbc04"/><path d="M0 49.5l26.77 20.08L58.2 93.14V17.5L41.9 5.29C24.61-7.66 0 4.65 0 26.23z" fill="#c5221f"/></svg><svg class="ic" style="left:43.9px;top:42.2px" width="8.6" height="8.2" viewBox="0 0 20 18.6" ><path d="M10 1.2 Q11 1.2 11.6 2.2 L19.4 16 Q20.2 17.8 18.2 18 H1.8 Q-0.2 17.8 0.6 16 L8.4 2.2 Q9 1.2 10 1.2 Z" fill="#f0616d"/><rect x="8.9" y="6" width="2.2" height="6.4" rx="1" fill="#7a2a33"/><circle cx="10" cy="15" r="1.3" fill="#7a2a33"/></svg>
<div class="t b label" id="t63" style="left:-14.4px;top:59px;font-size:8.1px;line-height:10px;color:#e6e6e6;letter-spacing:0.004px;transform-origin:0 7px;transform:scaleY(1.08);">Send Email Notification</div>
<div class="t sub" id="t64" style="left:7.3px;top:71px;font-size:7.0px;line-height:9px;color:#a8a8a8;letter-spacing:-0.032px;">send: message</div>
</div>
</main>
</body>
</html>
